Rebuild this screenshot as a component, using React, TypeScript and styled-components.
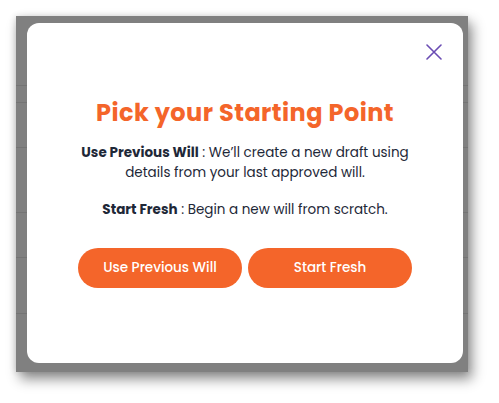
import styled, { createGlobalStyle } from "styled-components";

const GlobalStyle = createGlobalStyle`
	html, body {
		margin: 0;
		padding: 0;
		background: #ffffff;
		font-family: Poppins, Inter, "Noto Sans", sans-serif;
	}
	* {
		box-sizing: border-box;
	}
`;

const Page = styled.div`
	width: 499px;
	height: 403px;
	padding: 16px 0 0 16px;
`;

const Backdrop = styled.div`
	position: relative;
	width: 452px;
	height: 356px;
	background: #808080;
	box-shadow: 4px 7px 12px rgba(0, 0, 0, 0.45), -1px 0 6px rgba(0, 0, 0, 0.12);
	display: flex;
	flex-direction: column;
`;

const BgRow = styled.div<{ h: number }>`
	height: ${(p) => p.h}px;
	flex-shrink: 0;
	border-bottom: 1px solid #747474;
`;

const Modal = styled.div`
	position: absolute;
	left: 11px;
	top: 7px;
	width: 436px;
	height: 340px;
	background: #ffffff;
	border-radius: 12px;
	display: flex;
	flex-direction: column;
	align-items: center;
`;

const TopBar = styled.div`
	width: 100%;
	display: flex;
	justify-content: flex-end;
	padding: 21px 21px 0 0;
`;

const CloseButton = styled.button`
	width: 16px;
	height: 16px;
	padding: 0;
	border: none;
	background: none;
	cursor: pointer;
	display: flex;
	svg {
		display: block;
	}
`;

const Title = styled.h2`
	margin: 37px 0 0;
	font-size: 24px;
	line-height: 32px;
	font-weight: 700;
	color: #f4652a;
	letter-spacing: 0.45px;
`;

const Text = styled.p`
	margin: 14px 0 0;
	max-width: 340px;
	text-align: center;
	font-size: 13.5px;
	line-height: 20px;
	color: #1e2838;
	& + & {
		margin-top: 17px;
	}
	b {
		font-weight: 700;
	}
`;

const Actions = styled.div`
	display: flex;
	gap: 6px;
	margin-top: 28px;
`;

const Button = styled.button`
	width: 164px;
	height: 40px;
	border: none;
	border-radius: 20px;
	background: #f4652a;
	color: #ffffff;
	font-family: inherit;
	font-size: 13.5px;
	font-weight: 500;
	cursor: pointer;
`;

function App() {
	return (
		<Page>
			<GlobalStyle />
			<Backdrop>
				<BgRow h={70} />
				<BgRow h={17} />
				<BgRow h={45} />
				<BgRow h={65} />
				<BgRow h={45} />
				<BgRow h={56} />
				<Modal>
					<TopBar>
						<CloseButton aria-label="Close">
							<svg width="16" height="16" viewBox="0 0 16 16">
								<path
									d="M1 1 15 15 M15 1 1 15"
									stroke="#6a4cb3"
									strokeWidth="1.6"
									strokeLinecap="round"
								/>
							</svg>
						</CloseButton>
					</TopBar>
					<Title>Pick your Starting Point</Title>
					<Text>
						<b>Use Previous Will</b> : We’ll create a new draft using details
						from your last approved will.
					</Text>
					<Text>
						<b>Start Fresh</b> : Begin a new will from scratch.
					</Text>
					<Actions>
						<Button>Use Previous Will</Button>
						<Button>Start Fresh</Button>
					</Actions>
				</Modal>
			</Backdrop>
		</Page>
	);
}

export default App;
